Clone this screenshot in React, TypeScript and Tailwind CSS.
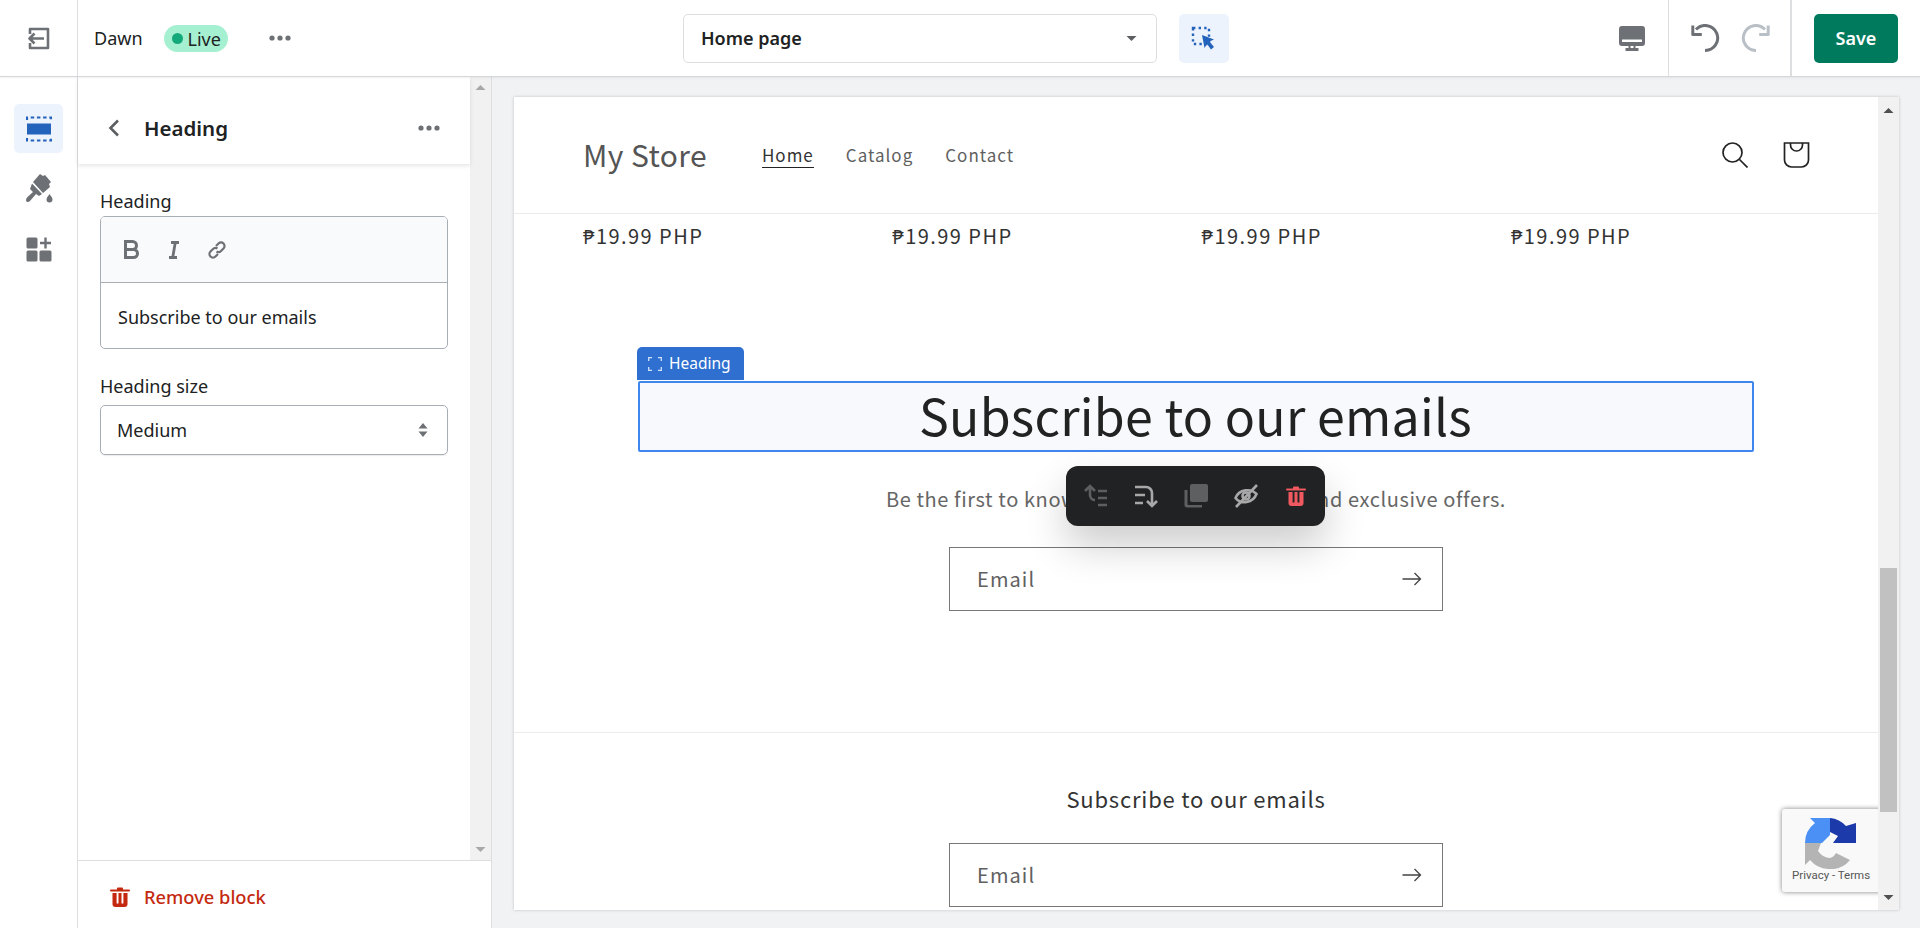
import React from "react";

const Dots = ({ c = "" }: { c?: string }) => (
  <svg width="22" height="6" viewBox="0 0 22 6" className={c} fill="#6d7175">
    <circle cx="3" cy="3" r="2.6" /><circle cx="11" cy="3" r="2.6" /><circle cx="19" cy="3" r="2.6" />
  </svg>
);

const Trash = ({ color, size = 20 }: { color: string; size?: number }) => (
  <svg width={size} height={size} viewBox="0 0 20 20" fill={color}>
    <path d="M8 0.500h4a1 1 0 0 1 1 1V2.500h6a1 1 0 0 1 0 2H1a1 1 0 0 1 0-2h6V1.500a1 1 0 0 1 1-1z" />
    <path fillRule="evenodd" d="M2.500 6h15v11a3 3 0 0 1-3 3h-9a3 3 0 0 1-3-3zM6.600 6v10.500h1.900V6zm4.900 0v10.500h1.900V6z" />
  </svg>
);

const Arrow = () => (
  <svg width="20" height="14" viewBox="0 0 20 14" fill="none" stroke="#444" strokeWidth="1.3">
    <path d="M0.5 7h18M12.5 1l6 6-6 6" />
  </svg>
);

const Caret = ({ up, color = "#555" }: { up?: boolean; color?: string }) => (
  <svg width="11" height="7" viewBox="0 0 11 7" fill={color}>
    <path d={up ? "M5.5 1l5 5H.5z" : "M.5 1h10l-5 5z"} />
  </svg>
);

const EmailField = () => (
  <div className="w-[494px] h-[64px] border border-[#777] flex items-center justify-between pl-[27px] pr-[20px] shrink-0">
    <span className="text-[20px] tracking-[1.1px] text-[#606060]">Email</span>
    <Arrow />
  </div>
);

const Price = () => <div className="text-[20px] leading-[28px] tracking-[1.45px] text-[#333]">₱19.99 PHP</div>;

export default function App() {
  return (
    <div className="w-[1920px] h-[928px] overflow-hidden flex flex-col bg-[#f1f2f4] text-[#202223] font-['Noto_Sans','Open_Sans',sans-serif]">
      {/* top bar */}
      <header className="h-[77px] shrink-0 bg-white border-b border-[#d5d7da] shadow-[0_1px_2px_rgba(0,0,0,0.06)] flex items-stretch relative z-10">
        <div className="w-[78px] border-r border-[#dcdee0] flex items-center justify-center">
          <svg width="23" height="23" viewBox="0 0 23 23" fill="none" stroke="#6d7175" strokeWidth="2.600">
            <path d="M3 7V2h18v19H3v-5" strokeLinejoin="round" />
            <path d="M17 11.500H2.500M7.500 6.500l-5 5 5 5" strokeLinejoin="round" />
          </svg>
        </div>
        <div className="w-[605px] flex items-center pl-[16px]">
          <span className="text-[18px] text-[#202223]">Dawn</span>
          <span className="ml-[21px] w-[64px] h-[27px] rounded-full bg-[#a4f0d0] flex items-center pl-[8px] gap-[5px] text-[18px]">
            <span className="w-[11px] h-[11px] rounded-full bg-[#14a97b]" />
            <span className="leading-none mt-[1px]">Live</span>
          </span>
          <Dots c="ml-[41px]" />
        </div>
        <div className="flex items-center gap-[22px] flex-1">
          <div className="w-[474px] h-[49px] rounded-[5px] border border-[#dcdee1] flex items-center justify-between pl-[17px] pr-[19px] text-[18px] font-semibold">
            Home page
            <Caret color="#5c5f62" />
          </div>
          <div className="w-[50px] h-[49px] rounded-[5px] bg-[#edf3fc] flex items-center justify-center">
            <svg width="26" height="28" viewBox="0 0 26 28">
              <path d="M2 4h16v16H2z" fill="none" stroke="#2463bc" strokeWidth="2.400" strokeDasharray="2.400 3.200" />
              <path d="M11 11l12 4.500-4.500 2 4.500 5.500-3 2.500-4-5.500-2.500 4z" fill="#2463bc" />
            </svg>
          </div>
        </div>
        <div className="w-[123px] border-r border-[#dcdee0] flex items-center pr-[23px] justify-end">
          <svg width="26" height="25" viewBox="0 0 26 25" fill="#6d7175">
            <path fillRule="evenodd" d="M3 0h20a3 3 0 0 1 3 3v14a3 3 0 0 1-3 3H3a3 3 0 0 1-3-3V3a3 3 0 0 1 3-3zm0 13.500V16h20v-2.500z" />
            <path d="M9.500 20h2v2h3v-2h2v2h3v3h-13v-3h3z" />
          </svg>
        </div>
        <div className="w-[123px] border-r-2 border-[#dcdee0] flex items-center justify-center gap-[21px] pl-[2px]">
          <svg width="29" height="28" viewBox="0 0 29 28" fill="none" stroke="#6d7175" strokeWidth="3">
            <path d="M14 26.500A12.500 12.500 0 1 0 5 5.500" />
            <path d="M1.800 1.500v9h9" strokeLinejoin="round" />
          </svg>
          <svg width="29" height="28" viewBox="0 0 29 28" fill="none" stroke="#b9bfc7" strokeWidth="3">
            <path d="M15 26.500A12.500 12.500 0 1 1 24 5.500" />
            <path d="M27.200 1.500v9h-9" strokeLinejoin="round" />
          </svg>
        </div>
        <div className="w-[128px] shrink-0 flex items-center pl-[22px]">
          <div className="w-[84px] h-[49px] rounded-[5px] bg-[#007a5c] text-white font-semibold text-[18px] flex items-center justify-center">Save</div>
        </div>
      </header>

      <div className="flex-1 flex min-h-0">
        {/* rail */}
        <nav className="w-[78px] shrink-0 bg-white border-r border-[#dcdee0] flex flex-col items-center pt-[27px]">
          <div className="w-[49px] h-[49px] rounded-[5px] bg-[#edf3fc] flex items-center justify-center">
            <svg width="26" height="26" viewBox="0 0 26 26" fill="#2463bc">
              <path d="M1 7.500h24v11H1z" />
              <path d="M1 4V1.500h24V4M1 22v2.500h24V22" fill="none" stroke="#2463bc" strokeWidth="2.200" strokeDasharray="3.500 2.700" />
            </svg>
          </div>
          <svg className="mt-[21px]" width="28" height="29" viewBox="0 0 28 29" fill="#6d7175">
            <path d="M15 0l3 2 2-1 6 7-2 2 1 3-7 6-10-11z" />
            <path d="M7 9.500l10 10.500-3 2-3-2-6 7c-1.500 1.500-4 1.500-4-1 0-1 .5-2 1.500-3L8 18l-3-3z" />
            <path d="M24.500 20c1.700 2.500 3 3.800 3 5.500a3 3 0 0 1-6 0c0-1.700 1.300-3 3-5.500z" />
          </svg>
          <svg className="mt-[34px]" width="26" height="25" viewBox="0 0 26 25" fill="#6d7175">
            <rect x="0.500" y="0.500" width="11" height="11" rx="1.500" />
            <rect x="0.500" y="13.500" width="11" height="11" rx="1.500" />
            <rect x="13.500" y="13.500" width="12" height="11" rx="1.500" />
            <path d="M18.300 0.500h2.400v4.300H25v2.400h-4.300v4.300h-2.400V7.200H14V4.800h4.300z" />
          </svg>
        </nav>

        {/* panel */}
        <aside className="w-[414px] shrink-0 bg-white border-r border-[#dcdee0] flex flex-col">
          <div className="flex-1 min-h-0 flex">
            <div className="flex-1 flex flex-col min-w-0">
              <div className="h-[87px] shrink-0 flex items-center pt-[15px] pl-[30px] pr-[30px] shadow-[0_2px_4px_rgba(0,0,0,0.1)] relative">
                <svg width="12" height="18" viewBox="0 0 12 18" fill="none" stroke="#5c5f62" strokeWidth="2.600">
                  <path d="M10 1.500L2.500 9l7.500 7.500" />
                </svg>
                <span className="ml-[24px] text-[20.500px] font-semibold text-[#202223] flex-1">Heading</span>
                <Dots />
              </div>
              <div className="px-[22px] pt-[26px]">
                <div className="text-[18px] leading-[22px] mb-[4px]">Heading</div>
                <div className="h-[133px] rounded-[5px] border border-[#a8aeb6] overflow-hidden">
                  <div className="h-[66px] bg-[#f9fafb] border-b border-[#a8aeb6] flex items-center pl-[23px] gap-[22px]">
                    <svg width="15" height="19" viewBox="0 0 15 19" fill="none" stroke="#6d7175" strokeWidth="3">
                      <path d="M1.500 1.500h7a4 4 0 0 1 0 8h-7zM1.500 9.500h8a4 4 0 0 1 0 8h-8z" />
                    </svg>
                    <svg className="ml-[7px]" width="12" height="18" viewBox="0 0 12 18" fill="none" stroke="#6d7175" strokeWidth="2.800">
                      <path d="M3 1.500h8M1 16.500h8M7.300 1.500L4.700 16.500" />
                    </svg>
                    <svg className="ml-[6px]" width="18" height="18" viewBox="0 0 18 18" fill="none" stroke="#6d7175" strokeWidth="2.200">
                      <path d="M8 5l2.500-2.500a3.500 3.500 0 0 1 5 5L13 10a3.500 3.500 0 0 1-4.500.5" />
                      <path d="M10 13l-2.500 2.500a3.500 3.500 0 0 1-5-5L5 8a3.500 3.500 0 0 1 4.500-.5" />
                    </svg>
                  </div>
                  <div className="pl-[17px] pt-[23px] text-[18px] leading-[22px]">Subscribe to our emails</div>
                </div>
                <div className="text-[18px] leading-[22px] mt-[26px] mb-[8px]">Heading size</div>
                <div className="h-[50px] pb-[0px] rounded-[5px] border border-[#a8aeb6] shadow-[0_1px_1px_rgba(0,0,0,0.08)] flex items-center justify-between pl-[16px] pr-[19px] text-[18px]">
                  <span className="mt-[1px]">Medium</span>
                  <svg width="10" height="16" viewBox="0 0 10 16" fill="#6d7175">
                    <path d="M5 1l4.500 5.500h-9zM5 15L.5 9.500h9z" />
                  </svg>
                </div>
              </div>
            </div>
            <div className="w-[21px] shrink-0 bg-[#f1f1f1] flex flex-col items-center justify-between py-[7px]">
              <Caret up color="#a8a8a8" />
              <Caret color="#a8a8a8" />
            </div>
          </div>
          <div className="h-[68px] shrink-0 border-t border-[#dcdee0] flex items-center pl-[32px] pt-[5px] gap-[14px] text-[#c4290f] text-[18.300px] font-medium">
            <Trash color="#c4290f" />
            Remove block
          </div>
        </aside>

        {/* preview */}
        <main className="flex-1 min-w-0 pt-[20px] pl-[22px] pr-[21px]">
          <div className="h-[813px] bg-white shadow-[0_0_3px_rgba(0,0,0,0.2)] flex relative overflow-hidden font-['Noto_Sans_CJK_JP','Noto_Sans',sans-serif]">
            <div className="flex-1 min-w-0 flex flex-col relative overflow-hidden">
              <div className="h-[117px] shrink-0 border-b border-[#ececec] flex items-center pl-[69px] pr-[68px]">
                <span className="text-[30px] tracking-[0.4px] text-[#555] -mt-[1px]">My Store</span>
                <div className="ml-[55px] flex items-center gap-[32px] text-[17px] tracking-[1px] text-[#5f5f5f]">
                  <span className="border-b border-[#222] text-[#333] leading-[24px]">Home</span>
                  <span className="leading-[24px]">Catalog</span>
                  <span className="leading-[24px]">Contact</span>
                </div>
                <div className="ml-auto flex items-center gap-[35px]">
                  <svg width="26" height="26" viewBox="0 0 26 26" fill="none" stroke="#222" strokeWidth="1.700">
                    <circle cx="10.500" cy="10.500" r="9.500" /><path d="M17.500 17.500L25.500 25.500" />
                  </svg>
                  <svg width="27" height="26" viewBox="0 0 27 26" fill="none" stroke="#222" strokeWidth="1.700">
                    <path d="M1.500 1h24v17a7 7 0 0 1-7 7h-10a7 7 0 0 1-7-7z" /><path d="M7.500 1v2a6 6 0 0 0 12 0V1" />
                  </svg>
                </div>
              </div>
              <div className="pl-[69px] pt-[8px] grid grid-cols-[309.300px_309.300px_309.300px_309.300px]">
                <Price /><Price /><Price /><Price />
              </div>
              <section className="flex flex-col items-center mt-[131px] relative">
                <div className="absolute left-[123px] top-[-34px] w-[107px] h-[33px] bg-[#2e6fd0] rounded-t-[5px] flex items-center pl-[11px] gap-[7px] text-white text-[15.500px] font-['Noto_Sans',sans-serif]">
                  <svg width="14" height="14" viewBox="0 0 14 14" fill="none" stroke="#cfe0fa" strokeWidth="1.300">
                    <path d="M.7 4V.7H4M10 .7h3.300V4M13.300 10v3.300H10M4 13.300H.7V10" />
                  </svg>
                  Heading
                </div>
                <div className="ml-[-1px] w-[1116px] h-[71px] border-2 border-[#3f86ee] rounded-[2px] bg-[#f7f9fd] flex items-center justify-center pb-[5px] text-[50px] text-[#222] tracking-[0.25px] leading-none">
                  Subscribe to our emails
                </div>
                <p className="mt-[33px] text-[20px] leading-[28px] tracking-[0.6px] text-[#666]">Be the first to know about new collections and exclusive offers.</p>
                <div className="mt-[34px]"><EmailField /></div>
                <div className="absolute left-[552px] top-[85px] w-[259px] h-[60px] rounded-[12px] bg-[#212224] shadow-[0_20px_40px_rgba(0,0,0,0.2)] flex items-center pl-[18px] gap-[26px]">
                  <svg width="24" height="24" viewBox="0 0 24 24" fill="none" stroke="#5e5f61" strokeWidth="2.600">
                    <path d="M1 7l5-5 5 5M6 2v9a5 5 0 0 0 5 5M14 7h9M14 14h9M14 21h9" />
                  </svg>
                  <svg width="24" height="24" viewBox="0 0 24 24" fill="none" stroke="#a8a8a9" strokeWidth="2.600">
                    <path d="M1 3h11a6 6 0 0 1 6 6v12M1 11h10M1 19h8M13 17l5 5 5-5" />
                  </svg>
                  <svg width="24" height="24" viewBox="0 0 24 24" fill="#5e5f61">
                    <rect x="6" y="0" width="18" height="18" rx="2" />
                    <path d="M3.500 6v14a1 1 0 0 0 1 1H18v2.500H3a2.500 2.500 0 0 1-2.500-2.500V6z" />
                  </svg>
                  <svg width="24" height="24" viewBox="0 0 24 24" fill="none" stroke="#a8a8a9" strokeWidth="2.600">
                    <path d="M1.500 14C5 5 17 4 22.500 10 19 19 7 21 1.500 14zM2 23L23 1" />
                    <circle cx="12" cy="12" r="3.500" />
                  </svg>
                  <span className="w-[24px] flex justify-center"><Trash color="#f0595f" /></span>
                </div>
              </section>
              <div className="mt-[121px] border-t border-[#ececec] flex flex-col items-center pt-[51px]">
                <div className="text-[22px] leading-[28px] tracking-[0.8px] text-[#333]">Subscribe to our emails</div>
                <div className="mt-[31px]"><EmailField /></div>
              </div>
              <div className="absolute left-[1268px] top-[712px] w-[110px] h-[83px] bg-[#f9f9f9] rounded-l-[3px] shadow-[0_0_5px_rgba(0,0,0,0.5)] flex flex-col pl-[23px] pt-[9px]">
                <svg width="51" height="51" viewBox="0 0 51 51">
                  <path d="M0 25A25 25 0 0 1 10 5L5 0H25V17L17 25Z" fill="#4a90f5" />
                  <path d="M25 0A25 25 0 0 1 41 8L51 5V25H28L33 18L25 14Z" fill="#1c3aa9" />
                  <path d="M0 25H16L13 33Q18 40 25 40Q29 39 31 35L45 42A25 25 0 0 1 23 51A25 25 0 0 1 5 42L0 47Z" fill="#b4b4b4" />
                </svg>
                <div className="text-[11.500px] leading-[14px] text-[#555] -ml-[13px] -mt-[1px] whitespace-nowrap font-['Roboto',sans-serif]">Privacy - Terms</div>
              </div>
            </div>
            <div className="w-[21px] shrink-0 bg-[#f1f1f1] flex flex-col items-center relative">
              <div className="h-[17px] flex items-end"><Caret up color="#505050" /></div>
              <div className="mt-[454px] w-[17px] h-[244px] bg-[#c1c1c1]" />
              <div className="mt-auto h-[16px]"><Caret color="#505050" /></div>
            </div>
          </div>
        </main>
      </div>
    </div>
  );
}
